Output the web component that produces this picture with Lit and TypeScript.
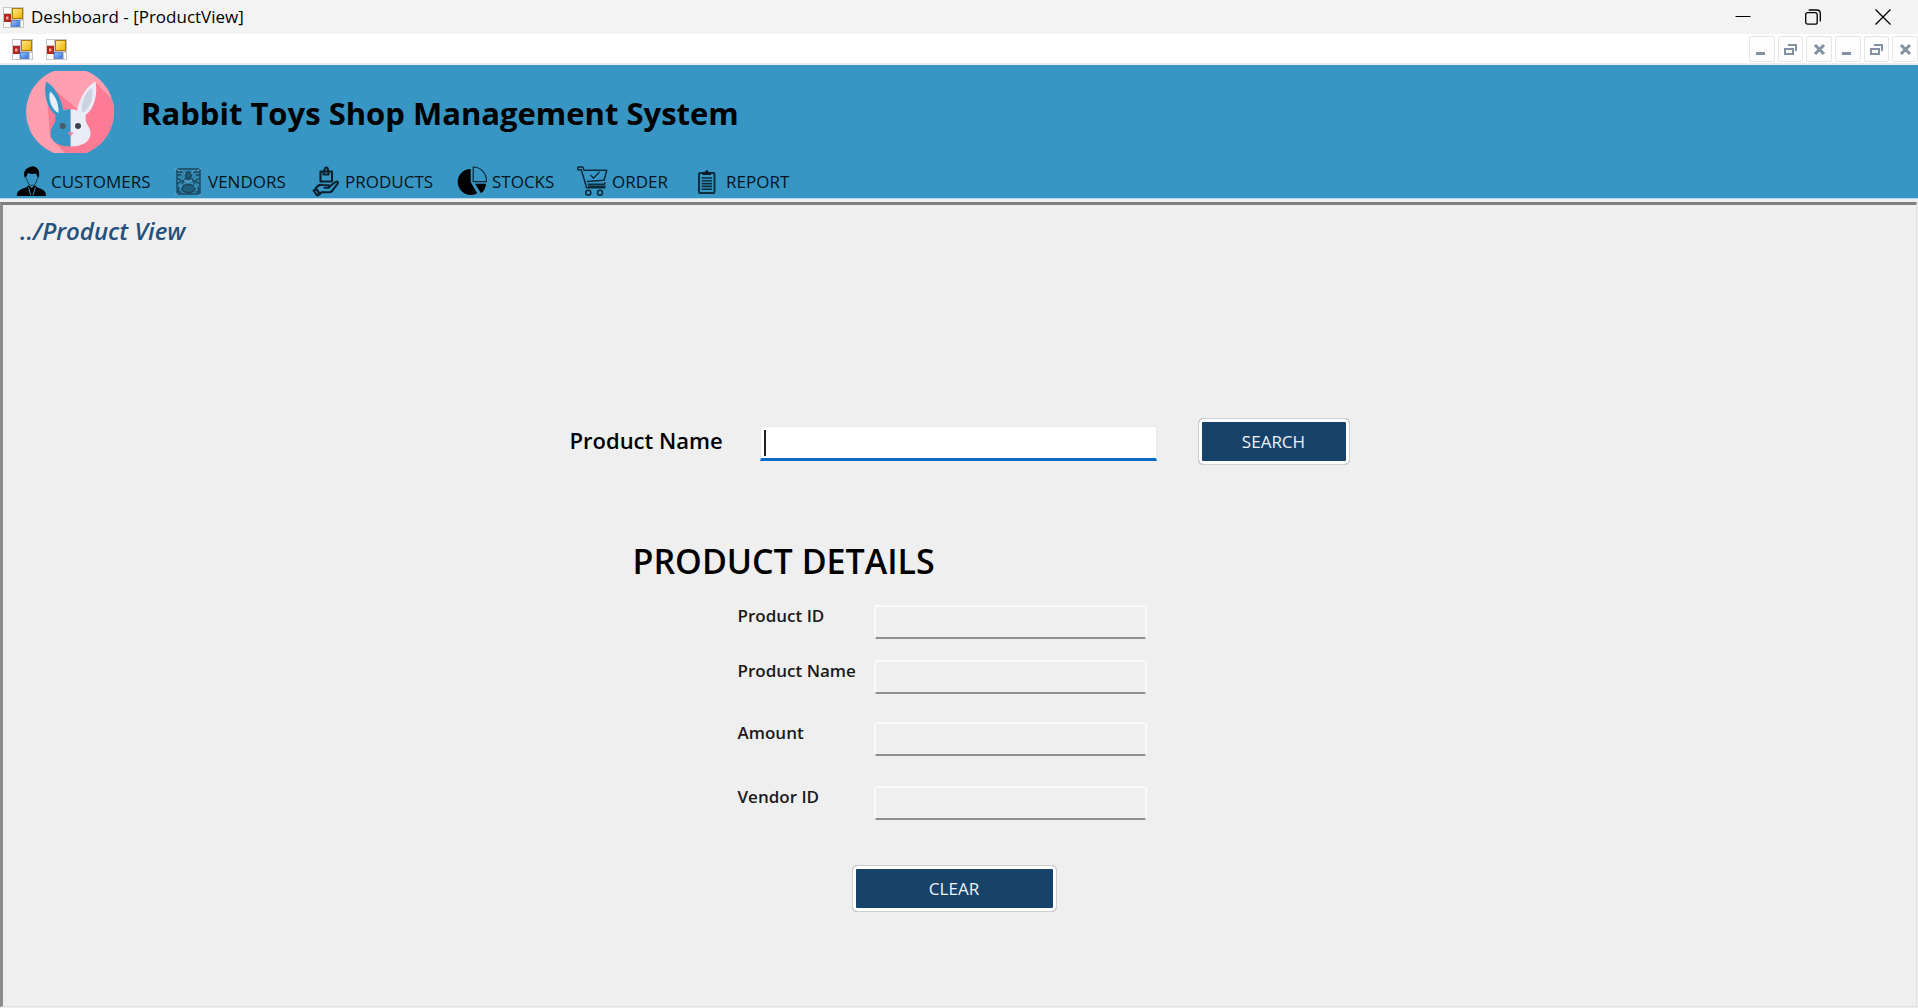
import { LitElement, html, css, svg } from "lit";
import { customElement } from "lit/decorators.js";

const formIcon = html`<svg class="form-icon" viewBox="0 0 21 21" aria-hidden="true">
  <defs>
    <linearGradient id="y" x1="0" y1="0" x2="1" y2="1"><stop offset="0" stop-color="#ffe98a" /><stop offset="1" stop-color="#f0b000" /></linearGradient>
    <linearGradient id="b" x1="0" y1="0" x2="1" y2="1"><stop offset="0" stop-color="#9cc4ff" /><stop offset="1" stop-color="#2f6fe0" /></linearGradient>
  </defs>
  <rect width="21" height="21" fill="#c6c6c6" />
  <rect x="1" y="1" width="7" height="5" fill="#fff" />
  <rect x="1" y="14" width="6" height="6" fill="#fff" />
  <rect x="18" y="14" width="2" height="6" fill="#fff" />
  <rect x="9.5" y="1.5" width="10" height="10" fill="url(#y)" stroke="#a87b10" />
  <rect x="1" y="7" width="7" height="8" fill="#b3261c" />
  <rect x="3" y="9.5" width="2.5" height="3" fill="#f3a49c" />
  <rect x="8.5" y="13.5" width="8" height="6" fill="url(#b)" stroke="#5a84d0" />
</svg>`;

const icons: Record<string, unknown> = {
  customers: svg`
    <path d="M8.500 11.500C7 5 10 2 14 1l2-.8C21 .3 24.500 4 22.800 11.500L21 10.500l-.8-3c-3 .8-6 .5-8.500-.5l-1 3.500z" fill="#000"/>
    <path d="M10 9.500c-1 1-.5 3 .8 3.800C11.500 17 13.500 19.500 16 19.500s4.300-2.500 5-6.200c1.300-.8 1.800-2.800.6-3.800" fill="none" stroke="#123242" stroke-width="1"/>
    <path d="M.8 30C1 25 3.500 23.500 11 21l1.500-2 3.300 3 3.200-3 1.500 2C27.500 23.500 30 25 30 30z" fill="#000"/>
    <path d="M12.500 21.500l2.300 8M19.300 21.500l-2.300 8" stroke="#3896c4" stroke-width="1"/>`,
  vendors: svg`
    <g fill="none" stroke="#163f55" stroke-width="1.400" opacity=".9">
      <rect x="4" y="3" width="23" height="25" rx="1" fill="#2b7294" fill-opacity=".45"/>
      <path d="M4 6h7M4 9h4M20 6h7M23 9h4M4 12l5 3-5 3M27 12l-5 3 5 3M9 18l3-5h7l3 5"/>
      <circle cx="15.500" cy="9" r="3" fill="#1b5572"/>
      <ellipse cx="15.500" cy="22.500" rx="6.500" ry="4" fill="#1d5a78"/>
      <path d="M5.500 21v5h3M25.500 21v5h-3"/>
    </g>
    <g fill="none" stroke="#9ccbe2" stroke-width=".8" opacity=".75">
      <path d="M2 2l5 3M28 2l-4 3M9 4l3 4M21 4l-3 4M11 14l4 2 4-2M7 20l2 1M23 20l-2 1M2 28h3M25 29h3"/>
    </g>`,
  products: svg`
    <g fill="none" stroke="#06202c" stroke-width="2.100" stroke-linejoin="round" stroke-linecap="round">
      <path d="M10.500 5.500h11.500v10H10.500z"/>
      <path d="M13.500 5.500v3h5v-3M14.500 4.500c0-4 3.500-4 3.500 0"/>
      <path d="M3.500 24.500l3.500-1 3 4.500-3 1.500z" fill="#06202c" fill-opacity=".35"/>
      <path d="M5.500 22.500c2-3 4.500-4 7-3.500l6 .3c2 .2 1.800 2.200 0 2.400h-4"/>
      <path d="M19.500 20.500l6-4.500c1.500-1 3.200 0 2 1.800L22 25c-.7.900-1.500 1.200-2.500 1.200H12l-3 1.500"/>
    </g>`,
  stocks: svg`
    <path d="M13.700 3v13l6.500 11.260A13 13 0 1 1 13.700 3z" fill="#000"/>
    <path d="M16.200 1v14.700h13.300C29.500 7 24 1.300 16.200 1z" fill="none" stroke="#0a2a3a" stroke-width="1.200"/>
    <path d="M18 17.700h11c-.2 4-2 7.300-5 9.600z" fill="#000"/>`,
  order: svg`
    <g fill="none" stroke="#0a2a3a" stroke-width="1.500" stroke-linejoin="round">
      <path d="M.8.900h5l1.200 3.300h22.800L27 14.300 10 15.500"/>
      <path d="M.8.900v2.800h3.400L8.500 17.500" />
      <path d="M8 16l1.500 5.700h18.300v-1.400H11M10.500 18.300h17l.5-2"/>
      <path d="M13.500 9l3 3.300 6-6.300" stroke-width="1.300"/>
      <circle cx="11.300" cy="26.800" r="2.500"/><circle cx="23" cy="26.800" r="2.500"/>
    </g>`,
  report: svg`
    <rect x="8" y="7" width="15.500" height="20" rx="1" fill="none" stroke="#0c2e3f" stroke-width="2"/>
    <path d="M11.500 9V6.300h2.500c0-2.600 3.500-2.600 3.500 0H20V9z" fill="#061c27"/>
    <path d="M10.500 12h10.500M10.500 14.800h10.500M10.500 17.600h10.500M10.500 20.400h10.500M10.500 23.200h10.500" stroke="#0c2e3f" stroke-width="1.600"/>`,
};

const glyphs: Record<string, unknown> = {
  Minimise: svg`<path d="M1 11.500h9" stroke-width="3"/>`,
  Restore: svg`<path d="M1 7h8v5H1zM4 3h8v6" stroke-width="2"/>`,
  Close: svg`<path d="M2 3l9 9M11 3l-9 9" stroke-width="3"/>`,
};

@customElement("app-root")
export class AppRoot extends LitElement {
  static styles = css`
    :host {
      display: flex;
      flex-direction: column;
      min-height: 100vh;
      background: #f0f0f0;
      color: #000;
      font-family: "Open Sans", "Noto Sans", sans-serif;
      font-size: 17px;
    }
    :host, * { box-sizing: border-box; }
    button { font: inherit; padding: 0; border: 0; background: none; color: inherit; cursor: pointer; }
    input { font: inherit; }
    .form-icon { width: 21px; height: 21px; display: block; }

    .titlebar { display: flex; align-items: center; height: 34px; padding-left: 3px; background: #f3f3f3; }
    .caption { flex: 1; margin: 0 0 0 7px; font-size: 17px; line-height: 34px; font-weight: 400; }
    .window-button { width: 70px; height: 34px; display: grid; place-items: center; }
    .window-button svg { width: 16px; height: 16px; fill: none; stroke: #000; }

    .mdibar { display: flex; align-items: center; height: 31px; padding: 1px 0 0 12px; gap: 13px; background: #fff; border-bottom: 2px solid #ececec; }
    .mdi-buttons { margin-left: auto; width: 169px; display: grid; grid-template-columns: repeat(6, 1fr); gap: 3px; }
    .mdi-button { height: 26px; border: 1px solid #e6e6e6; border-radius: 2px; background: #fdfdfd; display: grid; place-items: center; }
    .mdi-button svg { width: 13px; height: 15px; fill: none; stroke: #8291a1; }

    .header { background: #3896c4; border-bottom: 1px solid #b5d9ea; }
    .brand { display: flex; align-items: center; gap: 27px; padding: 6px 0 0 26px; }
    .logo { width: 88px; height: 82px; display: block; }
    .brand-name { margin: 0; padding-top: 2px; font-size: 31px; line-height: 40px; font-weight: 700; }
    .nav { display: grid; grid-template-columns: 157px 137px 147px 120px 114px max-content; padding: 13px 0 1px 16px; }
    .nav-link { display: flex; align-items: center; gap: 4px; color: #06141c; text-decoration: none; font-size: 17px; line-height: 30px; }
    .nav-icon { width: 31px; height: 31px; flex: none; }

    .client {
      flex: 1;
      margin: 3px 1px 1px 0;
      border: solid;
      border-width: 3px 1px 1px 3px;
      border-color: #7f7f7f #e0e0e0 #e0e0e0 #8c8c8c;
      background: #efefef;
    }
    .crumb { margin: 10px 0 0 17px; font-size: 24px; line-height: 32px; font-weight: 600; font-style: italic; color: #24507d; }
    .form { width: 780px; margin: 171px auto 0; }
    .search-row { display: grid; grid-template-columns: 190px 397px 1fr; align-items: end; }
    .search-label { padding-bottom: 9px; font-size: 22px; line-height: 32px; font-weight: 600; }
    .search-field { position: relative; padding-bottom: 4px; }
    .search-input { display: block; width: 100%; height: 35px; padding: 0 5px; border: 1px solid #e6eaee; border-bottom: 3px solid #0a6cc4; background: #fff; outline: none; font-size: 20px; }
    .caret { position: absolute; left: 4px; top: 4px; width: 2px; height: 26px; background: #222; }
    .search-field:focus-within .caret { display: none; }
    .action { height: 47px; border: 1px solid #cfcfcf; border-radius: 5px; background: #17436b; box-shadow: inset 0 0 0 3px #fff; color: #eef2f5; font-size: 17px; line-height: 44px; text-align: center; }
    .search-button { width: 152px; justify-self: end; }
    .details-title { margin: 74px 0 0 63px; font-size: 34px; line-height: 44px; font-weight: 600; }
    .details { display: grid; grid-template-columns: 136px 273px; grid-template-rows: 55px 62px 64px 34px; margin: 22px 0 0 168px; }
    .detail-label { font-size: 17px; line-height: 22px; font-weight: 600; color: #1a1a1a; }
    .detail-input { width: 100%; height: 34px; padding: 0 5px; border: 2px solid #f9f9f9; border-bottom: 2px solid #8f8f8f; border-radius: 3px; background: #efefef; outline: none; }
    .clear-button { display: block; width: 205px; margin: 45px 0 40px 282px; }
  `;

  private windowButtons = [
    ["Minimize window", svg`<path d="M.5 7.500h15"/>`],
    ["Restore window", svg`<rect x=".7" y="3.700" width="11.500" height="11.500" rx="2" stroke-width="1.300"/><path d="M3.700 1h8c2.300 0 3.600 1.300 3.600 3.600v8" stroke-width="1.300"/>`],
    ["Close window", svg`<path d="M.5.500l15 15M15.500.500l-15 15" stroke-width="1.300"/>`],
  ] as const;

  private links = [
    ["customers", "CUSTOMERS"], ["vendors", "VENDORS"], ["products", "PRODUCTS"],
    ["stocks", "STOCKS"], ["order", "ORDER"], ["report", "REPORT"],
  ];

  private fields = [
    ["product-id", "Product ID"], ["product-name", "Product Name"],
    ["amount", "Amount"], ["vendor-id", "Vendor ID"],
  ];

  private clear() {
    this.renderRoot.querySelectorAll("input").forEach((i) => (i.value = ""));
  }

  render() {
    return html`
      <div class="titlebar">
        ${formIcon}
        <p class="caption">Deshboard - [ProductView]</p>
        ${this.windowButtons.map(([label, shape]) => html`
          <button class="window-button" aria-label=${label}><svg viewBox="0 0 16 16">${shape}</svg></button>`)}
      </div>
      <div class="mdibar">
        ${formIcon}${formIcon}
        <div class="mdi-buttons">
          ${["Minimise", "Restore", "Close", "Minimise", "Restore", "Close"].map((g) => html`
            <button class="mdi-button" aria-label=${g}><svg viewBox="0 0 13 15">${glyphs[g]}</svg></button>`)}
        </div>
      </div>
      <header class="header">
        <div class="brand">
          <svg class="logo" viewBox="0 0 88 82" aria-hidden="true">
            <defs><clipPath id="disc"><circle cx="44" cy="41" r="44" /></clipPath></defs>
            <g clip-path="url(#disc)">
              <rect width="88" height="82" fill="#ffa0b1" />
              <path d="M20 11L51 38 69 11 88 30V82H39L24 66z" fill="#fd7b94" />
            </g>
            <path d="M20 10.700C27 14 35 25 37.500 39.500q3.500-1.500 7.200-1.300V75.500C33 75.500 24.500 71 24.500 62c0-5 3-7.500 4.500-11 1-2.500-.3-5 .5-7C22 38 17 24 20 10.700z" fill="#3896c4" />
            <path d="M69.600 10.700C62 14 54 25 51 39.500q-3.200-1.500-6.300-1.300V75.500C56 75.500 64.500 71 64.500 62c0-5-3-7.500-4.500-11-1-2.500.3-5-.5-7C68 38 72 24 69.600 10.700z" fill="#e9ecf6" />
            <path d="M24 20.500C29 24 33 32 32.500 42 27 39.500 21.500 30 24 20.500z" fill="#e9eef6" />
            <path d="M66 17.500C59.500 20 55 31 56 41.500 63 40 68 27 66 17.500z" fill="#cdd2e1" />
            <circle cx="36.700" cy="55" r="3" fill="#4f5865" />
            <circle cx="52" cy="55" r="3" fill="#3c4250" />
            <path d="M41.500 61.500h6.400L44.700 65z" fill="#fd7b94" />
          </svg>
          <h1 class="brand-name">Rabbit Toys Shop Management System</h1>
        </div>
        <nav class="nav">
          ${this.links.map(([id, label]) => html`
            <a class="nav-link" href="#${id}"><svg class="nav-icon" viewBox="0 0 31 31" aria-hidden="true">${icons[id]}</svg>${label}</a>`)}
        </nav>
      </header>
      <main class="client">
        <p class="crumb">../Product View</p>
        <form class="form" @submit=${(e: Event) => e.preventDefault()}>
          <div class="search-row">
            <label class="search-label" for="search">Product Name</label>
            <div class="search-field">
              <input class="search-input" id="search" type="text" />
              <span class="caret"></span>
            </div>
            <button class="action search-button" type="submit">SEARCH</button>
          </div>
          <h2 class="details-title">PRODUCT DETAILS</h2>
          <div class="details">
            ${this.fields.map(([id, label]) => html`
              <label class="detail-label" for=${id}>${label}</label>
              <input class="detail-input" id=${id} type="text" readonly />`)}
          </div>
          <button class="action clear-button" type="button" @click=${this.clear}>CLEAR</button>
        </form>
      </main>
    `;
  }
}
